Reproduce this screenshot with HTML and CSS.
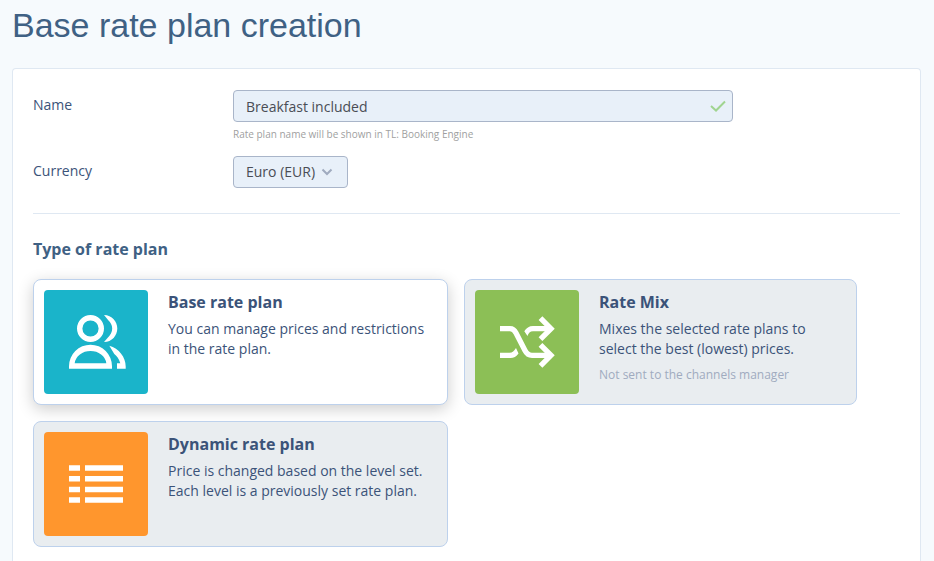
FILE: index.html
```html
<!DOCTYPE html>
<html lang="en">
<head>
    <meta charset="UTF-8">
    <meta name="viewport" content="width=device-width, initial-scale=1.0">
    <title>Base rate plan creation</title>
    <link rel="stylesheet" href="styles.css">
</head>
<body>
    <h1 class="page-title">Base rate plan creation</h1>

    <form class="panel">
        <!-- General settings -->
        <div class="form-row">
            <label class="form-label" for="plan-name">Name</label>
            <div class="form-field">
                <div class="input-wrap">
                    <input type="text" id="plan-name" class="text-input" value="Breakfast included" aria-describedby="plan-name-hint">
                    <svg class="check-icon" viewBox="0 0 16 12" aria-hidden="true">
                        <path d="M1 6l5 4.5L15 1.5" fill="none" stroke="#a0d490" stroke-width="2"/>
                    </svg>
                </div>
                <p class="hint" id="plan-name-hint">Rate plan name will be shown in TL: Booking Engine</p>
            </div>
        </div>
        <div class="form-row">
            <label class="form-label" for="currency">Currency</label>
            <div class="select-wrap">
                <select id="currency" class="select">
                    <option>Euro (EUR)</option>
                </select>
                <svg class="select-arrow" viewBox="0 0 12 8" aria-hidden="true">
                    <path d="M1.5 1.5L6 6l4.5-4.5" fill="none" stroke="#a0abbf" stroke-width="2"/>
                </svg>
            </div>
        </div>

        <hr class="divider">

        <!-- Rate plan type -->
        <h2 class="section-title" id="type-title">Type of rate plan</h2>
        <div class="cards" role="radiogroup" aria-labelledby="type-title">
            <label class="card">
                <input type="radio" class="card-radio" name="plan-type" value="base" checked>
                <svg class="card-icon card-icon-base" viewBox="0 0 104 104" aria-hidden="true">
                    <circle cx="46.5" cy="38.5" r="10.8" fill="none" stroke="#fff" stroke-width="5.4"/>
                    <path fill="#fff" fill-rule="evenodd" d="M25 78.7v-2.5a21.5 21.5 0 0 1 43 0v2.5zM30.7 73.2h31.6a15.9 13.6 0 0 0-31.6 0z"/>
                    <path fill="#fff" d="M60 25C68 25 73.3 31.5 73.3 38.5S68 52 60 52L63.5 48C66.5 45.2 68.2 42 68.2 38.5S66.5 32.5 64.5 30.5z"/>
                    <path fill="#fff" d="M65.3 55.7C75 58.5 81.7 67 81.7 76.5V78.7H73V73.2H76.3C75 68.5 73 66.5 70.3 64z"/>
                </svg>
                <span class="card-text">
                    <span class="card-title">Base rate plan</span>
                    <span class="card-desc">You can manage prices and restrictions in the rate plan.</span>
                </span>
            </label>

            <label class="card">
                <input type="radio" class="card-radio" name="plan-type" value="mix">
                <svg class="card-icon card-icon-mix" viewBox="0 0 104 104" aria-hidden="true">
                    <g fill="none" stroke="#fff" stroke-width="5.3">
                        <path d="M25 38.7H35C38 38.7 39.5 40 41 43L50 60.5C51.5 63.5 53.5 65.3 57 65.3H75"/>
                        <path d="M65.5 28.2L76 38.7 65.5 49.2M65.5 54.8L76 65.3 65.5 75.8"/>
                    </g>
                    <path fill="#fff" d="M25 62.7H34.5C37.5 62.7 39 61 41 58L43.5 63.5C41.5 66.5 38.5 68 35.5 68H25z"/>
                    <path fill="#fff" d="M75 36H58C54 36 51.5 38 49.3 41.3L52.5 46C53.5 43 55 41.3 58 41.3H75z"/>
                </svg>
                <span class="card-text">
                    <span class="card-title">Rate Mix</span>
                    <span class="card-desc">Mixes the selected rate plans to select the best (lowest) prices.</span>
                    <span class="card-note">Not sent to the channels manager</span>
                </span>
            </label>

            <label class="card">
                <input type="radio" class="card-radio" name="plan-type" value="dynamic">
                <svg class="card-icon card-icon-dynamic" viewBox="0 0 104 104" aria-hidden="true">
                    <path fill="#fff" d="M25 33.2h11v5.5H25zM41 33.2h38v5.5H41zM25 44h11v5.5H25zM41 44h38v5.5H41zM25 54.7h11v5.5H25zM41 54.7h38v5.5H41zM25 65.2h11v5.5H25zM41 65.2h38v5.5H41z"/>
                </svg>
                <span class="card-text">
                    <span class="card-title">Dynamic rate plan</span>
                    <span class="card-desc">Price is changed based on the level set. Each level is a previously set rate plan.</span>
                </span>
            </label>
        </div>
    </form>
</body>
</html>
```

FILE: styles.css
```css
* {
    box-sizing: border-box;
}

body {
    display: flex;
    flex-direction: column;
    min-height: 100vh;
    margin: 0;
    padding: 0 13px 0 12px;
    background-color: #f6fafd;
    color: #3b5379;
    font-family: "Open Sans", "Noto Sans", sans-serif;
    font-size: 14px;
    line-height: 20px;
}

.page-title {
    margin: 0 0 18px;
    color: #3f6184;
    font-family: "Liberation Sans", Arial, sans-serif;
    font-size: 34px;
    font-weight: normal;
    line-height: 50px;
}

.panel {
    flex: 1;
    padding: 21px 20px 14px;
    background-color: #fff;
    border: 1px solid #dfe8f2;
    border-bottom: none;
    border-radius: 4px 4px 0 0;
}

/* Form rows */
.form-row {
    display: grid;
    grid-template-columns: 200px minmax(0, 500px);
    align-items: start;
}

.form-row + .form-row {
    margin-top: 14px;
}

.form-label {
    padding-top: 5px;
}

.input-wrap {
    position: relative;
}

.text-input,
.select {
    display: block;
    height: 32px;
    padding: 0 12px;
    background-color: #e8f0f9;
    border: 1px solid #a9b5c9;
    border-radius: 4px;
    color: #4a4d55;
    font: inherit;
}

.text-input {
    width: 100%;
}

.check-icon {
    position: absolute;
    top: 10px;
    right: 7px;
    width: 16px;
    height: 12px;
}

.hint {
    margin: 4px 0 0;
    color: #a09f9f;
    font-size: 10px;
    line-height: 16px;
}

.select-wrap {
    position: relative;
    justify-self: start;
}

.select {
    padding-right: 31px;
    appearance: none;
}

.select-arrow {
    position: absolute;
    top: 12px;
    right: 15px;
    width: 12px;
    height: 8px;
    pointer-events: none;
}

.divider {
    margin: 25px 0 23px;
    border: none;
    border-top: 1px solid #dfe8f2;
}

.section-title {
    margin: 0 0 18px;
    color: #3f6184;
    font-size: 16px;
    font-weight: bold;
    line-height: 24px;
}

/* Type cards */
.cards {
    display: grid;
    grid-template-columns: minmax(0, 415px) minmax(0, 393px);
    gap: 16px;
}

.card {
    position: relative;
    display: flex;
    gap: 20px;
    padding: 10px;
    background-color: #e9edf0;
    border: 1px solid #bdd1ec;
    border-radius: 8px;
    cursor: pointer;
}

.card:has(.card-radio:checked) {
    background-color: #fff;
    box-shadow: 0 4px 16px rgba(0, 0, 0, 0.2);
}

.card:has(.card-radio:focus-visible) {
    outline: 2px solid #1ab4ca;
}

.card-radio {
    position: absolute;
    margin: 0;
    opacity: 0;
}

.card-icon {
    flex: none;
    width: 104px;
    height: 104px;
    border-radius: 4px;
}

.card-icon-base {
    background-color: #1ab4ca;
}

.card-icon-mix {
    background-color: #8cbf56;
}

.card-icon-dynamic {
    background-color: #ff962d;
}

.card-text {
    display: flex;
    flex-direction: column;
}

.card-title {
    margin-bottom: 5px;
    font-size: 16px;
    font-weight: bold;
    line-height: 24px;
}

.card-note {
    margin-top: 6px;
    color: #a0abbf;
    font-size: 12px;
}
```
